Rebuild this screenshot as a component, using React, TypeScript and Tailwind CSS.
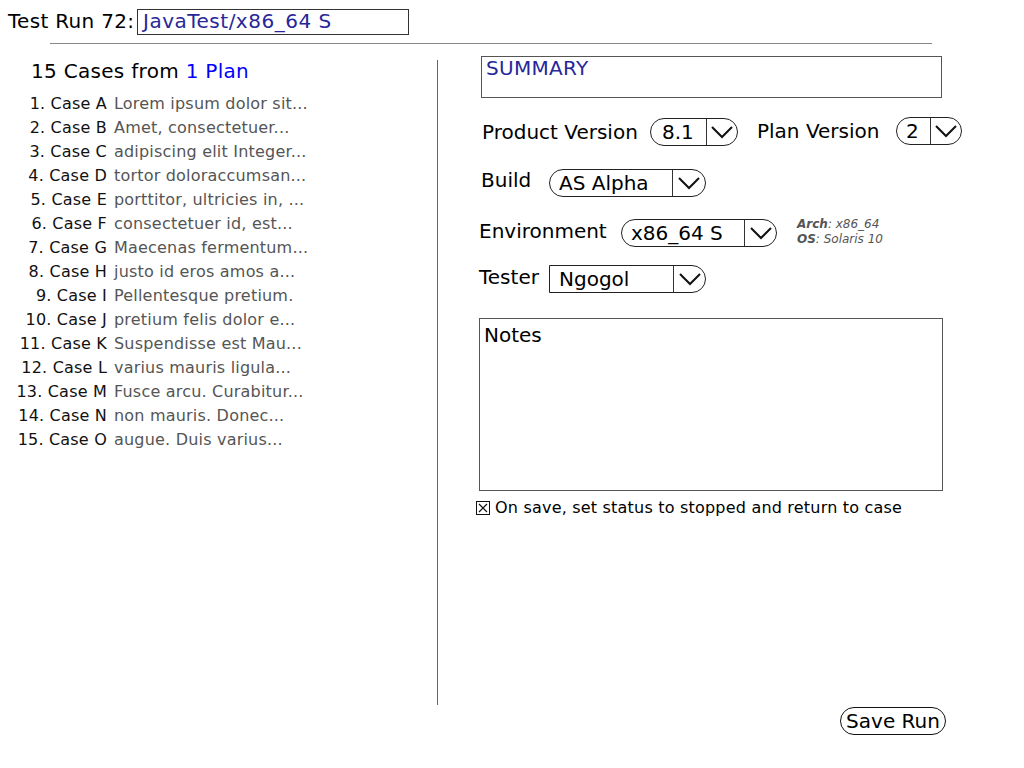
const cases = [
  ["1. Case A", "Lorem ipsum dolor sit..."],
  ["2. Case B", "Amet, consectetuer..."],
  ["3. Case C", "adipiscing elit Integer..."],
  ["4. Case D", "tortor doloraccumsan..."],
  ["5. Case E", "porttitor, ultricies in, ..."],
  ["6. Case F", "consectetuer id, est..."],
  ["7. Case G", "Maecenas fermentum..."],
  ["8. Case H", "justo id eros amos a..."],
  ["9. Case I", "Pellentesque pretium."],
  ["10. Case J", "pretium felis dolor e..."],
  ["11. Case K", "Suspendisse est Mau..."],
  ["12. Case L", "varius mauris ligula..."],
  ["13. Case M", "Fusce arcu. Curabitur..."],
  ["14. Case N", "non mauris. Donec..."],
  ["15. Case O", "augue. Duis varius..."],
];

const Chevron = () => (
  <svg width="24" height="14" viewBox="0 0 24 14" fill="none">
    <path d="M2 2 L12 12 L22 2" stroke="#111" strokeWidth="2" />
  </svg>
);

const Select = ({
  value,
  textW,
  arrowW = 32,
  pl = 9,
  square = false,
}: {
  value: string;
  textW: number;
  arrowW?: number;
  pl?: number;
  square?: boolean;
}) => (
  <div
    className={
      "flex h-[28px] items-stretch border border-[#222] bg-white " +
      (square ? "rounded-r-full" : "rounded-full")
    }
  >
    <div className="flex items-center text-[20px] leading-none" style={{ width: textW, paddingLeft: pl }}>
      {value}
    </div>
    <div className="flex items-center justify-center border-l border-[#333]" style={{ width: arrowW }}>
      <Chevron />
    </div>
  </div>
);

const App = () => {
  return (
    <div className="w-[1024px] h-[768px] bg-white text-black font-['DejaVu_Sans',sans-serif] overflow-hidden">
      <div className="flex items-center pl-[8px] pt-[9px]">
        <span className="mb-[3px] w-[129px] text-[20px] leading-none tracking-[0.3px]">Test Run 72:</span>
        <div className="flex h-[26px] w-[272px] items-center border border-[#333] px-[5px] text-[20px] leading-none tracking-[0.5px] text-[#27279a]">
          <span className="mb-[2px]">JavaTest/x86_64 S</span>
        </div>
      </div>
      <div className="ml-[50px] mt-[8px] h-px w-[882px] bg-[#888]" />

      <div className="flex">
        <div className="w-[437px] pt-[15px]">
          <h1 className="pl-[31px] text-[20px] leading-[24px] tracking-[0.3px]">
            15 Cases from <span className="text-[#0000ff]">1 Plan</span>
          </h1>
          <div className="mt-[9px]">
            {cases.map(([name, desc], index) => (
              <div className="flex text-[16px] leading-[24px] tracking-[0.2px]" key={index}>
                <span className="w-[107px] text-right text-[#111]">{name}</span>
                <span className="ml-[7px] text-[#555]">{desc}</span>
              </div>
            ))}
          </div>
        </div>
        <div className="mt-[16px] h-[645px] w-px bg-[#666]" />

        <div className="pt-[12px]">
          <div className="ml-[43px] h-[42px] w-[461px] border border-[#555] px-[4px] text-[20px] leading-[22px] tracking-[0.3px] text-[#27279a]">
            SUMMARY
          </div>

          <div className="mt-[18px] flex h-[30px] items-center text-[20px]">
            <span className="ml-[44px] mt-[2px] w-[168px]">Product Version</span>
            <div className="mt-[1px]">
              <Select value="8.1" textW={55} arrowW={31} pl={11} />
            </div>
            <span className="ml-[19px] w-[139px]">Plan Version</span>
            <div className="mb-[1px]">
              <Select value="2" textW={33} arrowW={31} />
            </div>
          </div>

          <div className="mt-[23px] flex h-[28px] items-center text-[20px]">
            <span className="ml-[43px] mb-[6px] w-[68px]">Build</span>
            <Select value="AS Alpha" textW={122} arrowW={33} />
          </div>

          <div className="mt-[22px] flex h-[28px] items-center text-[20px]">
            <span className="ml-[41px] mb-[4px] w-[142px]">Environment</span>
            <Select value="x86_64 S" textW={122} arrowW={32} />
            <div className="ml-[20px] mb-[2px] text-[12px] italic leading-[15px] text-[#555]">
              <div>
                <b>Arch</b>: x86_64
              </div>
              <div>
                <b>OS</b>: Solaris 10
              </div>
            </div>
          </div>

          <div className="mt-[18px] flex h-[28px] items-center text-[20px]">
            <span className="ml-[41px] mb-[5px] w-[70px]">Tester</span>
            <Select value="Ngogol" textW={123} arrowW={32} square />
          </div>

          <div className="ml-[41px] mt-[25px] h-[173px] w-[464px] border border-[#555] px-[4px] pt-[4px] text-[20px] leading-[24px]">
            Notes
          </div>

          <div className="ml-[38px] mt-[7px] flex h-[20px] items-center text-[16px] tracking-[0.2px]">
            <svg width="14" height="14" viewBox="0 0 14 14" fill="none">
              <rect x="0.5" y="0.5" width="13" height="13" stroke="#111" />
              <path d="M3 3 L11 11 M11 3 L3 11" stroke="#111" strokeWidth="1.2" />
            </svg>
            <span className="ml-[5px]">On save, set status to stopped and return to case</span>
          </div>
        </div>
      </div>

      <div className="flex justify-end pr-[78px] pt-[2px]">
        <button className="h-[28px] w-[106px] rounded-full border border-[#111] text-[20px] leading-none">
          Save Run
        </button>
      </div>
    </div>
  );
};

export default App;
